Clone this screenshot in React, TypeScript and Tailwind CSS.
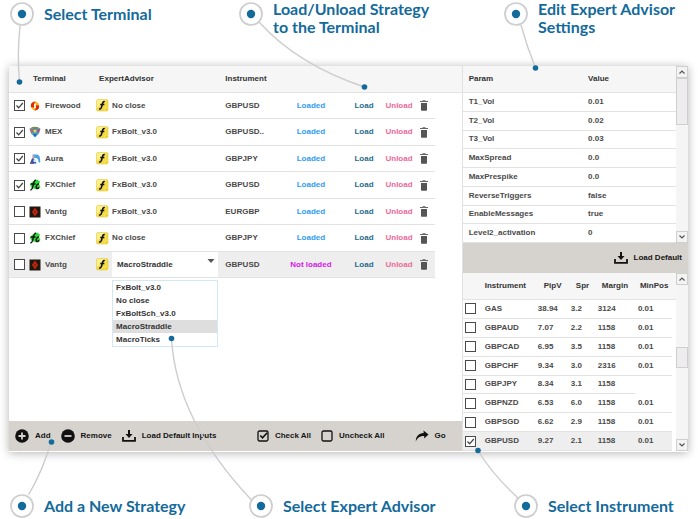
import { Fragment, useState, type ReactNode } from "react";

type Broker = "firewood" | "mex" | "aura" | "fxchief" | "vantg";

interface Strategy {
  terminal: string;
  broker: Broker;
  advisor: string;
  instrument: string;
  loaded: boolean;
  checked: boolean;
  editing?: boolean;
}

const strategies: Strategy[] = [
  { terminal: "Firewood", broker: "firewood", advisor: "No close", instrument: "GBPUSD", loaded: true, checked: true },
  { terminal: "MEX", broker: "mex", advisor: "FxBolt_v3.0", instrument: "GBPUSD..", loaded: true, checked: true },
  { terminal: "Aura", broker: "aura", advisor: "FxBolt_v3.0", instrument: "GBPJPY", loaded: true, checked: true },
  { terminal: "FXChief", broker: "fxchief", advisor: "FxBolt_v3.0", instrument: "GBPUSD", loaded: true, checked: true },
  { terminal: "Vantg", broker: "vantg", advisor: "FxBolt_v3.0", instrument: "EURGBP", loaded: true, checked: false },
  { terminal: "FXChief", broker: "fxchief", advisor: "No close", instrument: "GBPJPY", loaded: true, checked: false },
  { terminal: "Vantg", broker: "vantg", advisor: "MacroStraddle", instrument: "GBPUSD", loaded: false, checked: false, editing: true },
];

const advisors = ["FxBolt_v3.0", "No close", "FxBoltSch_v3.0", "MacroStraddle", "MacroTicks"];

const params = [
  ["T1_Vol", "0.01"],
  ["T2_Vol", "0.02"],
  ["T3_Vol", "0.03"],
  ["MaxSpread", "0.0"],
  ["MaxPrespike", "0.0"],
  ["ReverseTriggers", "false"],
  ["EnableMessages", "true"],
  ["Level2_activation", "0"],
];

const instruments = [
  ["GAS", "38.94", "3.2", "3124", "0.01"],
  ["GBPAUD", "7.07", "2.2", "1158", "0.01"],
  ["GBPCAD", "6.95", "3.5", "1158", "0.01"],
  ["GBPCHF", "9.34", "3.0", "2316", "0.01"],
  ["GBPJPY", "8.34", "3.1", "1158"],
  ["GBPNZD", "6.53", "6.0", "1158", "0.01"],
  ["GBPSGD", "6.62", "2.9", "1158", "0.01"],
  ["GBPUSD", "9.27", "2.1", "1158", "0.01"],
];

function Checkbox({ label, initial }: { label: string; initial: boolean }) {
  const [on, setOn] = useState(initial);
  return (
    <span className="grid size-[11px]">
      <input
        type="checkbox"
        aria-label={label}
        checked={on}
        onChange={() => setOn(!on)}
        className="col-start-1 row-start-1 size-[11px] appearance-none border border-[#4a4a4a] bg-white"
      />
      {on && (
        <svg viewBox="0 0 11 11" className="pointer-events-none col-start-1 row-start-1 size-[11px]">
          <path d="M2.5 5.5 L4.7 7.8 L8.8 3" fill="none" stroke="#444" strokeWidth="1.3" />
        </svg>
      )}
    </span>
  );
}

function BrokerIcon({ broker }: { broker: Broker }) {
  return (
    <svg viewBox="0 0 12 12" className="size-3 shrink-0">
      {broker === "firewood" && (
        <>
          <circle cx="6" cy="6" r="4.2" fill="#f7b51a" />
          <path d="M5.600 1.600 C2.600 2 1.400 4.400 2 7 L5.600 7.400 C4.200 5 4.800 3.200 6.600 1.600Z" fill="#dd2413" />
          <path d="M6.400 10.400 C9.400 10 10.600 7.600 10 5.400 L6.600 5.200 C7.800 7 7.200 8.800 5.400 10.400Z" fill="#dd2413" />
          <path d="M5.200 4 L7 3.400 L6.700 8 L5 8.200Z" fill="#fff8e0" />
        </>
      )}
      {broker === "mex" && (
        <>
          <path d="M0.500 2.500 L3.500 1 H8.500 L11.500 2.500 L10 7.500 L6 11.500 L2 7.500Z" fill="#46a9cf" />
          <path d="M3 1.300 L6 0.700 L9 1.300 L8 3 H4Z" fill="#7d8a3c" />
          <path d="M1 3 L4.500 3.500 L3.500 7 L2 6.500Z" fill="#e5542d" />
          <path d="M11 3 L7.500 3.500 L8.500 7 L10 6.500Z" fill="#c8456c" />
          <path d="M4.500 4 H7.500 L6 7Z" fill="#f6e04b" />
          <path d="M4 7.500 L6 8 L8 7.500 L6 11Z" fill="#1d5fa8" />
        </>
      )}
      {broker === "aura" && (
        <>
          <path d="M3.500 1.500 H8 C10.500 2 11.300 4 11.300 9.500 H9.500 C9.500 6.500 8.800 5 6.500 5 H4Z" fill="#4aa3e0" />
          <path d="M1 10.500 L3.500 4 L5.500 6.500 L7.500 10.500Z" fill="#2c55a8" />
          <path d="M3.500 3 L5.500 2.500 L5 5 L3 6Z" fill="#f0a8a0" />
          <path d="M4.500 6.500 H7.500 V9 H4.500Z" fill="#cfe9f7" />
          <path d="M1 9.700 H5 V11 H1Z" fill="#7c4fa0" />
        </>
      )}
      {broker === "fxchief" && (
        <>
          <path d="M3 3 L8 0.500 L11 2.500 L10 5 L11.500 8 L8 10.500 L3 9 L1 6Z" fill="#2fd83b" />
          <path d="M7 1.200 C5 1 4.600 3.500 4 6.500 C3.600 9 3 11 1.300 11 M1.500 5 H6.500" fill="none" stroke="#0c1a0c" strokeWidth="1.500" />
          <path d="M10 5.200 C7.500 4.500 6.200 9.500 8.300 9.600 C9 9.600 9.600 9 10.200 8.400" fill="none" stroke="#0c1a0c" strokeWidth="1.500" />
        </>
      )}
      {broker === "vantg" && (
        <>
          <rect x="0.500" y="0.500" width="11" height="11" fill="#20180f" />
          <path d="M6 1.500 L9 6 L6 10.500 L3 6Z" fill="#c5240f" />
          <path d="M6 4 L7 6 L6 8 L5 6Z" fill="#8a1a0c" />
        </>
      )}
    </svg>
  );
}

function AdvisorIcon() {
  return (
    <svg viewBox="0 0 13 13" className="size-[13px] shrink-0">
      <rect x="0.500" y="0.500" width="11.500" height="11.500" rx="1.500" fill="#f3dc45" stroke="#d9bf35" strokeWidth="0.500" />
      <path d="M0.800 2 Q0.800 0.800 2 0.800 H10.500 L0.800 9Z" fill="#fbf08a" />
      <path d="M8.800 2.600 C7 2 6.600 4 6.100 6 C5.600 8.500 5 10.500 3 10 M4.300 5.500 H8.300" fill="none" stroke="#111" strokeWidth="1.500" />
      <path d="M10.500 8.500 L12.500 10.500 L10.500 12.500 L8.500 10.500Z" fill="#f2cd1c" stroke="#fff6b0" strokeWidth="0.500" />
    </svg>
  );
}

function TrashIcon() {
  return (
    <svg viewBox="0 0 8 11" className="h-[11px] w-2">
      <path d="M0 1 H2.500 V0.300 H5.500 V1 H8 V2 H0Z" fill="#666" />
      <path d="M1 3 H7 V10 Q7 10.700 6.300 10.700 H1.700 Q1 10.700 1 10Z" fill="#555" />
    </svg>
  );
}

function DownloadIcon() {
  return (
    <svg viewBox="0 0 14 12" className="h-3 w-3.5">
      <path d="M6 0 H8 V4 H10.500 L7 8 L3.500 4 H6Z" fill="#111" />
      <path d="M1 7 V10.800 H13 V7" fill="none" stroke="#111" strokeWidth="1.800" />
    </svg>
  );
}

function RoundIcon({ plus }: { plus: boolean }) {
  return (
    <svg viewBox="0 0 14 14" className="size-3.5">
      <circle cx="7" cy="7" r="6.800" fill="#111" />
      <path d={plus ? "M3.500 7 H10.500 M7 3.500 V10.500" : "M3.500 7 H10.500"} stroke="#d6d3ce" strokeWidth="1.800" />
    </svg>
  );
}

function BoxIcon({ ticked }: { ticked: boolean }) {
  return (
    <svg viewBox="0 0 12 12" className="size-3">
      <rect x="1" y="1" width="10" height="10" rx="1.500" fill="none" stroke="#111" strokeWidth="1.300" />
      {ticked && <path d="M3.300 5.500 L5.500 7.800 L10.200 2.800" fill="none" stroke="#111" strokeWidth="1.600" />}
    </svg>
  );
}

function GoIcon() {
  return (
    <svg viewBox="0 0 14 12" className="h-3 w-3.5">
      <path d="M8.500 0.500 L13.500 4.500 L9.200 8.500 V6 C5 6 2.500 7.500 0.800 11.500 C0.800 6.500 3.500 3.300 8.700 3Z" fill="#111" />
    </svg>
  );
}

function ToolButton({ icon, children }: { icon: ReactNode; children: ReactNode }) {
  return (
    <button type="button" className="flex items-center gap-1.5 whitespace-nowrap text-[#151515]">
      {icon}
      {children}
    </button>
  );
}

function Scrollbar({ thumb }: { thumb: string }) {
  const arrow = "grid h-3 w-full place-items-center border border-[#cfcfcf] bg-[#f3f3f3]";
  return (
    <div className="flex w-3 shrink-0 flex-col bg-[#f5f5f5]">
      <button type="button" aria-label="Scroll up" className={arrow}>
        <svg viewBox="0 0 8 8" className="size-2">
          <path d="M1.500 5.500 L4 3 L6.500 5.500" fill="none" stroke="#555" strokeWidth="1.200" />
        </svg>
      </button>
      <div className={thumb} />
      <button type="button" aria-label="Scroll down" className={`mt-auto ${arrow}`}>
        <svg viewBox="0 0 8 8" className="size-2">
          <path d="M1.500 2.500 L4 5 L6.500 2.500" fill="none" stroke="#555" strokeWidth="1.200" />
        </svg>
      </button>
    </div>
  );
}

function Callout({ lines }: { lines: string[] }) {
  return (
    <div className="flex items-start gap-2.5">
      <svg viewBox="0 0 24 24" className="size-6 shrink-0">
        <circle cx="12" cy="12" r="11" fill="#fff" stroke="#cdcdcd" strokeWidth="1.700" />
        <circle cx="12" cy="12" r="4.200" fill="#146a9b" />
      </svg>
      <p
        className={`font-['Lato',sans-serif] text-[16px] leading-[18px] font-bold whitespace-nowrap text-[#146a9b] ${
          lines.length > 1 ? "-mt-0.5" : "pt-[3px]"
        }`}
      >
        {lines.map((line, i) => (
          <Fragment key={line}>
            {i > 0 && <br />}
            {line}
          </Fragment>
        ))}
      </p>
    </div>
  );
}

function AdvisorPicker() {
  const [value, setValue] = useState("MacroStraddle");
  return (
    <div className="relative grid h-full w-[106px] items-center bg-white">
      <select
        aria-label="Expert advisor"
        value={value}
        onChange={(e) => setValue(e.target.value)}
        className="col-start-1 row-start-1 w-full appearance-none bg-transparent pl-[5px] text-[#333]"
      >
        {advisors.map((a) => (
          <option key={a}>{a}</option>
        ))}
      </select>
      <svg viewBox="0 0 8 4" className="pointer-events-none col-start-1 row-start-1 mr-[3px] mb-2 h-1 w-2 justify-self-end">
        <path d="M0.500 0 H7.500 L4 4Z" fill="#555" />
      </svg>
      <ul role="listbox" aria-label="Advisors" className="absolute top-full left-0 z-10 mt-[3px] w-full border border-[#d3e8f6] bg-white text-[#333]">
        {advisors.map((a) => (
          <li
            key={a}
            role="option"
            aria-selected={a === value}
            onClick={() => setValue(a)}
            className={a === value ? "h-[13px] bg-[#dedede] pl-[3px] leading-[14px]" : "h-[13px] pl-[3px] leading-[14px]"}
          >
            {a}
          </li>
        ))}
      </ul>
    </div>
  );
}

function StrategyTable() {
  return (
    <table className="w-full table-fixed border-separate border-spacing-0 text-left">
      <colgroup>
        <col className="w-[20px]" />
        <col className="w-[67px]" />
        <col className="w-[127px]" />
        <col className="w-[63px]" />
        <col className="w-[49px]" />
        <col className="w-[43px]" />
        <col className="w-[38px]" />
        <col className="w-[18px]" />
        <col className="w-[27px]" />
      </colgroup>
      <thead>
        <tr className="h-[27px] text-[#333]">
          <th className="border-b border-[#e2e2e2] bg-[#f6f6f6]" />
          <th className="border-b border-[#e2e2e2] bg-[#f6f6f6] pl-1">Terminal</th>
          <th className="border-b border-[#e2e2e2] bg-[#f6f6f6] pl-[3px]">ExpertAdvisor</th>
          <th className="border-b border-[#e2e2e2] bg-[#f6f6f6] pl-0.5">Instrument</th>
          <th colSpan={5} className="border-b border-[#e2e2e2] bg-[#f6f6f6]" />
        </tr>
      </thead>
      <tbody>
        {strategies.map((s, i) => {
          const cell = s.editing ? "border-b border-[#e2e2e2] bg-[#eeeeee]" : "border-b border-[#e2e2e2]";
          const height = i % 2 === 0 ? "h-[26px]" : "h-[27px]";
          return (
            <tr key={i} className={height}>
              <td className={`${cell} pl-[5px]`}>
                <Checkbox label={`Use ${s.terminal}, row ${i + 1}`} initial={s.checked} />
              </td>
              <td className={cell}>
                <div className="flex items-center gap-1">
                  <BrokerIcon broker={s.broker} />
                  {s.terminal}
                </div>
              </td>
              <td className={cell}>
                <div className="flex h-[25px] items-center gap-[3px]">
                  <AdvisorIcon />
                  {s.editing ? <AdvisorPicker /> : s.advisor}
                </div>
              </td>
              <td className={`${cell} pl-0.5`}>{s.instrument}</td>
              <td className={`${cell} text-center whitespace-nowrap`}>
                {s.loaded ? <span className="text-[#2f9bf5]">Loaded</span> : <span className="text-[#d815ea]">Not loaded</span>}
              </td>
              <td className={`${cell} pl-[19px]`}>
                <button type="button" className="text-[#1f6d8c]">Load</button>
              </td>
              <td className={`${cell} pl-[7px]`}>
                <button type="button" className="text-[#ee6a99]">Unload</button>
              </td>
              <td className={`${cell} pl-[3px]`}>
                <button type="button" aria-label="Delete" className="block">
                  <TrashIcon />
                </button>
              </td>
            </tr>
          );
        })}
      </tbody>
    </table>
  );
}

function ParamTable() {
  return (
    <table className="h-[177px] flex-1 table-fixed border-separate border-spacing-0 text-left">
      <thead>
        <tr className="h-[27px] text-[#333]">
          <th className="w-[56%] border-b border-[#e2e2e2] bg-[#f6f6f6] pl-1.5">Param</th>
          <th className="border-b border-[#e2e2e2] bg-[#f6f6f6] pl-1.5">Value</th>
        </tr>
      </thead>
      <tbody>
        {params.map(([name, value]) => (
          <tr key={name}>
            <td className="border-b border-[#e2e2e2] pl-1.5">{name}</td>
            <td className="border-b border-[#e2e2e2] pl-1.5">{value}</td>
          </tr>
        ))}
      </tbody>
    </table>
  );
}

function InstrumentTable() {
  return (
    <table className="h-[178px] flex-1 table-fixed border-separate border-spacing-0 text-left">
      <colgroup>
        <col className="w-[22px]" />
        <col className="w-[53px]" />
        <col className="w-[33px]" />
        <col className="w-[27px]" />
        <col className="w-[37px]" />
        <col className="w-[37px]" />
        <col className="w-[4px]" />
      </colgroup>
      <thead>
        <tr className="h-[27px] text-[#333]">
          <th className="border-b border-[#e2e2e2] bg-[#f6f6f6]" />
          <th className="border-b border-[#e2e2e2] bg-[#f6f6f6]">Instrument</th>
          <th className="border-b border-[#e2e2e2] bg-[#f6f6f6] pl-1.5">PipV</th>
          <th className="border-b border-[#e2e2e2] bg-[#f6f6f6] pl-[5px]">Spr</th>
          <th className="border-b border-[#e2e2e2] bg-[#f6f6f6] pl-1">Margin</th>
          <th colSpan={2} className="border-b border-[#e2e2e2] bg-[#f6f6f6] pl-[5px]">MinPos</th>
        </tr>
      </thead>
      <tbody>
        {instruments.map(([name, ...values]) => {
          const picked = name === "GBPUSD";
          const cell = picked ? "border-b border-[#e2e2e2] bg-[#eeeeee]" : "border-b border-[#e2e2e2]";
          return (
            <tr key={name}>
              <td className={`${cell} pl-0.5`}>
                <Checkbox label={name} initial={picked} />
              </td>
              <td className={cell}>{name}</td>
              {values.map((v, i) => (
                <td key={i} className={i === 3 ? `${cell} pl-[3px]` : cell}>
                  {v}
                </td>
              ))}
            </tr>
          );
        })}
      </tbody>
    </table>
  );
}

/* Lines that tie each callout to the control it describes. */
function Connectors() {
  return (
    <svg width="698" height="519" viewBox="0 0 698 519" className="pointer-events-none absolute top-0 left-0 z-20">
      <g fill="none" stroke="#cdcdcd" strokeWidth="1.400">
        <path d="M20 26 Q17 54 19.500 82" />
        <path d="M259 22 Q298 65 364.500 87" />
        <path d="M521 25 Q527 47 535.500 68" />
        <path d="M51 442 Q43 470 28.500 495" />
        <path d="M171.500 338 Q176 420 251.500 500" />
        <path d="M478 450.500 Q492 474 518 498" />
      </g>
      <g fill="#146a9b">
        <circle cx="19.500" cy="82" r="2.800" />
        <circle cx="364.500" cy="87" r="2.800" />
        <circle cx="535.500" cy="68" r="2.800" />
        <circle cx="51.500" cy="442" r="2.800" />
        <circle cx="171.500" cy="338.500" r="2.800" />
        <circle cx="478" cy="450.500" r="2.800" />
      </g>
    </svg>
  );
}

export default function App() {
  return (
    <div className="relative overflow-hidden bg-white font-['Liberation_Sans',Arial,sans-serif] text-[8px] leading-[10px] font-bold text-[#4a4a4a]">
      <header className="grid h-[66px] grid-cols-[229px_265px_1fr] pt-0.5 pl-2.5">
        <Callout lines={["Select Terminal"]} />
        <Callout lines={["Load/Unload Strategy", "to the Terminal"]} />
        <Callout lines={["Edit Expert Advisor", "Settings"]} />
      </header>

      <main className="mr-2.5 ml-[9px] grid grid-cols-[2fr_1fr] border-b border-white bg-white shadow-[0_1px_9px_rgba(0,0,0,0.3)]">
        <section className="flex min-w-0 flex-col">
          <StrategyTable />
          <div className="mt-auto flex h-[30px] items-center gap-2.5 bg-[#d6d3ce] pr-4 pl-1.5">
            <ToolButton icon={<RoundIcon plus />}>Add</ToolButton>
            <ToolButton icon={<RoundIcon plus={false} />}>Remove</ToolButton>
            <ToolButton icon={<DownloadIcon />}>Load Default Inputs</ToolButton>
            <div className="ml-auto flex items-center gap-2.5">
              <ToolButton icon={<BoxIcon ticked />}>Check All</ToolButton>
              <ToolButton icon={<BoxIcon ticked={false} />}>Uncheck All</ToolButton>
            </div>
            <div className="ml-5">
              <ToolButton icon={<GoIcon />}>Go</ToolButton>
            </div>
          </div>
        </section>

        <section className="min-w-0 border-l border-[#e2e2e2]">
          <div className="flex">
            <ParamTable />
            <Scrollbar thumb="h-[47px] border border-[#cfcfcf] bg-[#eeecee]" />
          </div>
          <div className="flex h-[30px] items-center justify-end bg-[#d6d3ce] pr-1.5">
            <ToolButton icon={<DownloadIcon />}>Load Default</ToolButton>
          </div>
          <div className="flex">
            <InstrumentTable />
            <Scrollbar thumb="mt-[62px] h-[21px] border border-[#cfcfcf] bg-[#eeecee]" />
          </div>
        </section>
      </main>

      <footer className="grid grid-cols-[239px_265px_1fr] pt-[42px] pb-px pl-2.5">
        <Callout lines={["Add a New Strategy"]} />
        <Callout lines={["Select Expert Advisor"]} />
        <Callout lines={["Select Instrument"]} />
      </footer>

      <Connectors />
    </div>
  );
}
